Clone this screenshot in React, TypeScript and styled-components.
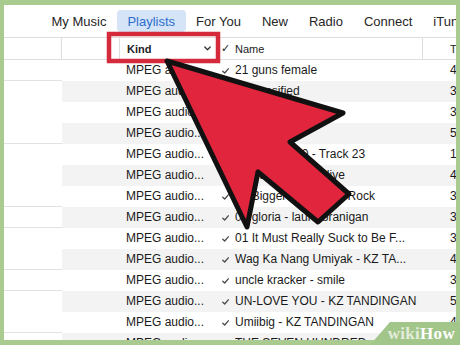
import React from 'react';
import styled, { createGlobalStyle } from 'styled-components';

const GlobalStyle = createGlobalStyle`
  html, body {
    margin: 0;
    padding: 0;
  }
  body {
    background: #a9cb8f;
    font-family: 'Liberation Sans', Arial, sans-serif;
  }
`;

const Frame = styled.div`
  position: relative;
  width: 460px;
  height: 345px;
  box-sizing: border-box;
  padding: 5px 4px;
  background: #a9cb8f;
  overflow: hidden;
`;

const Window = styled.div`
  width: 452px;
  height: 335px;
  background: #fff;
  overflow: hidden;
`;

const NavBar = styled.nav`
  height: 32px;
  display: flex;
  align-items: center;
  padding-left: 37px;
  font-size: 13px;
  color: #262626;
  white-space: nowrap;
`;

const NavItem = styled.div<{ $active?: boolean }>`
  height: 22px;
  line-height: 24px;
  padding: 0 10.5px;
  border-radius: 4px;
  background: ${(p) => (p.$active ? '#d5e4f6' : 'transparent')};
  color: ${(p) => (p.$active ? '#2e6fce' : 'inherit')};
`;

const columns = '58px 58px 98px 14px 191px 1fr';

const HeaderRow = styled.div`
  display: grid;
  grid-template-columns: ${columns};
  height: 23px;
  box-sizing: border-box;
  border-top: 1px solid #dedede;
  border-bottom: 1px solid #dedede;
  font-size: 11px;
  color: #222;
`;

const HeaderCell = styled.div<{ $divider?: boolean; $pad?: number; $bold?: boolean }>`
  display: flex;
  align-items: center;
  justify-content: space-between;
  padding-left: ${(p) => p.$pad ?? 0}px;
  padding-right: 7px;
  border-right: ${(p) => (p.$divider ? '1px solid #dedede' : 'none')};
  font-weight: ${(p) => (p.$bold ? 700 : 400)};
  overflow: hidden;
  white-space: nowrap;
`;

const Row = styled.div<{ $striped: boolean }>`
  display: grid;
  grid-template-columns: ${columns};
  height: 21px;
  background: ${(p) => (p.$striped ? '#f3f3f3' : '#fff')};
  font-size: 12px;
  line-height: 21px;
  color: #1a1a1a;
`;

const LeftCell = styled.div<{ $divider: boolean }>`
  background: #fff;
  box-sizing: border-box;
  border-bottom: ${(p) => (p.$divider ? '1px solid #e2e2e2' : 'none')};
`;

const Cell = styled.div<{ $pad?: number }>`
  padding-left: ${(p) => p.$pad ?? 0}px;
  white-space: nowrap;
  overflow: hidden;
`;

const CheckCell = styled.div`
  display: flex;
  align-items: center;
  padding-left: 4px;
`;

const Overlay = styled.svg`
  position: absolute;
  top: 0;
  left: 0;
  pointer-events: none;
`;

const Watermark = styled.div`
  position: absolute;
  right: 0;
  bottom: 0;
  width: 90px;
  height: 23px;
  box-sizing: border-box;
  padding-right: 5px;
  clip-path: polygon(20px 0, 100% 0, 100% 100%, 0 100%);
  background: #a2c58a;
  display: flex;
  align-items: center;
  justify-content: flex-end;
  font-family: 'Liberation Serif', 'Times New Roman', serif;
  font-weight: 700;
  font-size: 17px;
  letter-spacing: 0.3px;
`;

const Wiki = styled.span`
  color: #e3ecdb;
`;

const How = styled.span`
  color: #fff;
`;

const Check = () => (
  <svg width="7" height="6" viewBox="0 0 7 6">
    <path d="M0.8 3.2 L2.7 5 L6.3 0.8" fill="none" stroke="#4a4a4a" strokeWidth="1.3" strokeLinecap="round" strokeLinejoin="round" />
  </svg>
);

const Chevron = () => (
  <svg width="7" height="5" viewBox="0 0 7 5">
    <path d="M0.8 1 L3.5 3.8 L6.2 1" fill="none" stroke="#333" strokeWidth="1.3" strokeLinecap="round" strokeLinejoin="round" />
  </svg>
);

const navItems = ['My Music', 'Playlists', 'For You', 'New', 'Radio', 'Connect', 'iTunes Store'];

const tracks = [
  { name: '21 guns female', time: '4:01', divider: true },
  { name: 'Unclassified', time: '3:22', divider: false },
  { name: 'Someday', time: '3:48', divider: false },
  { name: 'Tadhana', time: '5:10', divider: true },
  { name: 'Top Hits 2010 - Track 23', time: '1:57', divider: false },
  { name: 'KZ Tandingan - Alive', time: '4:12', divider: false },
  { name: '01 Bigger Than Your Rock', time: '3:35', divider: true },
  { name: '04 gloria - laura branigan', time: '3:53', divider: true },
  { name: '01 It Must Really Suck to Be F...', time: '3:29', divider: false },
  { name: 'Wag Ka Nang Umiyak - KZ TA...', time: '4:41', divider: true },
  { name: 'uncle kracker - smile', time: '3:34', divider: true },
  { name: 'UN-LOVE YOU - KZ TANDINGAN', time: '5:06', divider: false },
  { name: 'Umiibig - KZ TANDINGAN', time: '4:18', divider: true },
  { name: 'THE SEVEN HUNDRED', time: '3:50', divider: false },
];

export default function App() {
  return (
    <>
      <GlobalStyle />
      <Frame>
        <Window>
          <NavBar>
            {navItems.map((item) => (
              <NavItem key={item} $active={item === 'Playlists'}>
                {item}
              </NavItem>
            ))}
          </NavBar>
          <HeaderRow>
            <HeaderCell $divider />
            <HeaderCell $divider />
            <HeaderCell $pad={7} $bold>
              Kind
              <Chevron />
            </HeaderCell>
            <HeaderCell $pad={3}>✓</HeaderCell>
            <HeaderCell $pad={3} $divider>
              Name
            </HeaderCell>
            <HeaderCell $pad={27}>Time</HeaderCell>
          </HeaderRow>
          {tracks.map((t, i) => (
            <Row key={t.name} $striped={i % 2 === 1}>
              <LeftCell $divider={t.divider} />
              <Cell />
              <Cell $pad={6}>MPEG audio...</Cell>
              <CheckCell>
                <Check />
              </CheckCell>
              <Cell $pad={3}>{t.name}</Cell>
              <Cell $pad={27}>{t.time}</Cell>
            </Row>
          ))}
        </Window>

        <Overlay width="460" height="345" viewBox="0 0 460 345">
          <rect x="109" y="34" width="109" height="27" fill="none" stroke="#d42a3c" strokeWidth="4.5" />
          <polygon
            points="167,61 343,113 290,142 349,194 318,222 258,172 247,227"
            fill="#e0253d"
            stroke="#111"
            strokeWidth="5"
            strokeLinejoin="round"
          />
        </Overlay>

        <Watermark>
          <Wiki>wiki</Wiki>
          <How>How</How>
        </Watermark>
      </Frame>
    </>
  );
}
